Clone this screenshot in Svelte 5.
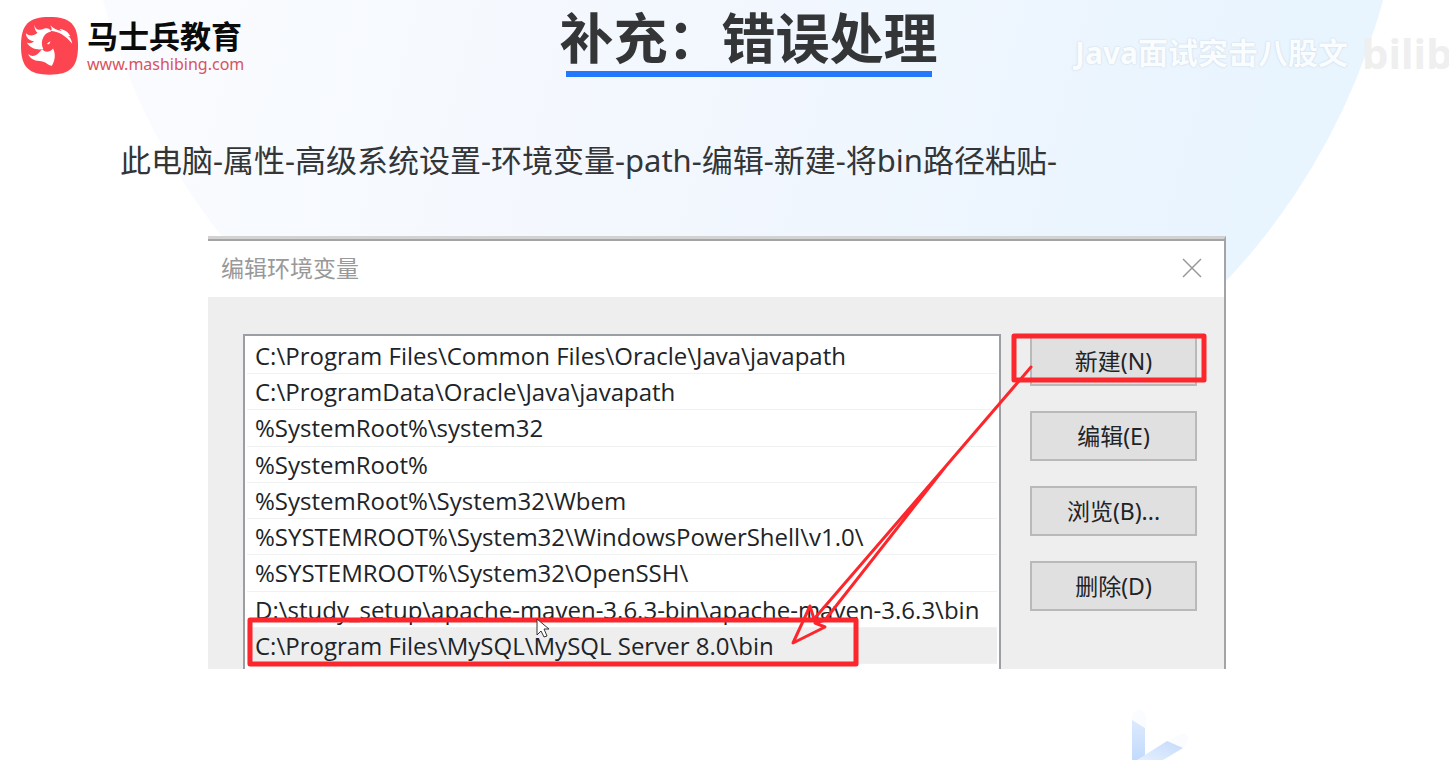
<script>
  const paths = [
    'C:\\Program Files\\Common Files\\Oracle\\Java\\javapath',
    'C:\\ProgramData\\Oracle\\Java\\javapath',
    '%SystemRoot%\\system32',
    '%SystemRoot%',
    '%SystemRoot%\\System32\\Wbem',
    '%SYSTEMROOT%\\System32\\WindowsPowerShell\\v1.0\\',
    '%SYSTEMROOT%\\System32\\OpenSSH\\',
    'D:\\study_setup\\apache-maven-3.6.3-bin\\apache-maven-3.6.3\\bin',
    'C:\\Program Files\\MySQL\\MySQL Server 8.0\\bin'
  ];
  const actions = ['新建(N)', '编辑(E)', '浏览(B)...', '删除(D)'];

  let selected = $state(8);
</script>

<div class="slide">
  <svg class="backdrop" viewBox="0 0 1449 760" preserveAspectRatio="xMidYMin slice" aria-hidden="true">
    <defs>
      <linearGradient id="disc" gradientUnits="userSpaceOnUse" x1="200" y1="0" x2="1260" y2="280">
        <stop offset="0" stop-color="#f9fbfe" />
        <stop offset="0.5" stop-color="#f2f7fe" />
        <stop offset="1" stop-color="#e8f4fe" />
      </linearGradient>
      <linearGradient id="bar" x1="0" y1="0" x2="0" y2="1">
        <stop offset="0" stop-color="#dceafd" />
        <stop offset="1" stop-color="#c3dafc" />
      </linearGradient>
      <linearGradient id="arm" x1="0" y1="1" x2="1" y2="0">
        <stop offset="0" stop-color="#e6f0fe" />
        <stop offset="1" stop-color="#c3dafc" />
      </linearGradient>
    </defs>
    <circle cx="743" cy="-173" r="663" fill="url(#disc)" />
    <path d="M1132 720c0-14 14-14 14 0v8l-14-8z" fill="#fbfcff" />
    <path d="M1132 720l13 8v32h-13z" fill="url(#bar)" />
    <path d="M1167 741l14-7c9-3 9 10 1 14z" fill="#fafcff" />
    <path d="M1137 760l30-19 16 7-20 12z" fill="url(#arm)" />
  </svg>

  <header>
    <a class="brand" href="#home">
      <svg class="horse" viewBox="9 9 176 180" aria-hidden="true">
        <path fill="#fd4551" d="M97 12C160 12 184 34 184 100S160 188 97 188 10 166 10 100 34 12 97 12z" />
        <g fill="#fff">
          <path d="M52 35C52 52 66 54 80 48C92 44 100 50 102 56C92 58 84 63 79 72C72 84 72 96 78 110C58 114 38 108 28 90C36 94 44 92 50 86C36 86 26 76 25 62C36 72 50 70 60 60C53 54 50 44 52 35z" />
          <path d="M99 37C106 48 104 52 100 54C125 56 148 70 166 94C165 82 160 74 154 70L161 71C152 55 138 49 128 49L134 55C120 52 108 46 99 37z" />
          <path d="M32 125C44 136 60 132 74 110C82 120 96 122 108 108C118 128 112 148 104 161C90 158 84 146 66 146C50 146 36 138 32 125z" />
          <path d="M90 92l10-6-3 8-5 2z" />
        </g>
      </svg>
      <span class="brand-text">
        <strong>马士兵教育</strong>
        <span class="site">www.mashibing.com</span>
      </span>
    </a>
    <h1>补充：错误处理</h1>
    <div class="watermark">
      <span>Java面试突击八股文</span>
      <span class="bili">bilibili</span>
    </div>
  </header>

  <main>
    <p class="steps">此电脑-属性-高级系统设置-环境变量-path-编辑-新建-将bin路径粘贴-</p>

    <section class="dialog" aria-label="编辑环境变量">
      <div class="titlebar">
        <h2>编辑环境变量</h2>
        <button class="close" aria-label="关闭">
          <svg viewBox="0 0 20 20" aria-hidden="true"><path d="M1 1l18 18M19 1L1 19" /></svg>
        </button>
      </div>

      <div class="content">
        <ul>
          {#each paths as path, i}
            <li class:selected={i === selected}>
              <button class="entry" onclick={() => (selected = i)}>{path}</button>
            </li>
          {/each}
        </ul>
        <div class="actions">
          {#each actions as action}
            <button>{action}</button>
          {/each}
        </div>
      </div>

      <!-- red pen marks over the dialog -->
      <svg class="marks" viewBox="0 0 1018 433" aria-hidden="true">
        <g fill="none" stroke="#fc272c" stroke-linejoin="round" stroke-linecap="round">
          <rect x="806" y="100" width="190" height="44" stroke-width="5" />
          <rect x="42" y="384" width="606" height="44" stroke-width="5" />
          <path d="M823 131L738 230 606 383M738 230L617 384" stroke-width="3" />
          <path d="M606 383L602 370 585 407 617 391 607 387 617 384" stroke-width="3" />
        </g>
        <path d="M329 383v16l4-4 3 6 3-1-3-7 5 0z" fill="#fff" stroke="#333" stroke-width="1" />
      </svg>
    </section>
  </main>
</div>

<style>
  :global(body) {
    margin: 0;
    background: #fff;
  }

  .slide {
    position: relative;
    min-height: 100vh;
    overflow: hidden;
    color: #333537;
    font-family: "Noto Sans", "Noto Sans CJK SC", sans-serif;
  }

  .backdrop {
    position: absolute;
    inset: 0;
    width: 100%;
    height: 100%;
  }

  header {
    position: relative;
    display: grid;
    grid-template-columns: 1fr auto 1fr;
    align-items: start;
    height: 100px;
    padding-left: 20px;
  }

  .brand {
    display: flex;
    gap: 8px;
    padding-top: 16px;
    color: #0b0b0b;
    text-decoration: none;
  }

  .horse {
    width: 59px;
    height: 59px;
  }

  .brand-text {
    display: flex;
    flex-direction: column;
  }

  .brand strong {
    font: 700 31px/38px "Noto Sans CJK SC", sans-serif;
  }

  .site {
    color: #d9525e;
    font-size: 16px;
    line-height: 20px;
  }

  h1 {
    margin: 0 0 0 28px;
    font: 700 54px/71px "Noto Sans CJK SC", sans-serif;
  }

  h1::after {
    content: "";
    display: block;
    height: 6px;
    margin: 0 6px;
    background: #2378fb;
  }

  .watermark {
    display: flex;
    justify-content: flex-end;
    gap: 14px;
    padding-top: 31px;
    color: #fafdff;
    font-size: 30px;
    font-weight: 700;
    line-height: 44px;
    text-shadow: 0 0 2px #c3ced8;
    white-space: nowrap;
  }

  .bili {
    width: 87px;
    overflow: hidden;
    color: #efefef;
    font-size: 42px;
    text-shadow: none;
  }

  main {
    position: relative;
    padding: 38px 223px 0 208px;
  }

  .steps {
    margin: 0 -88px 54px;
    font: 400 31px/44px "Noto Sans", "Noto Sans CJK SC", sans-serif;
  }

  .dialog {
    position: relative;
    box-sizing: border-box;
    height: 433px;
    overflow: hidden;
    border-top: 3px solid #d2d2d2;
    border-right: 2px solid #a4a4a6;
    background: #eee;
  }

  .titlebar {
    display: flex;
    align-items: center;
    justify-content: space-between;
    height: 56px;
    padding: 0 22px 0 13px;
    border-top: 2px solid #a4a4a6;
    background: #fff;
  }

  h2 {
    margin: 0 0 4px;
    color: #999;
    font: 400 23px/32px "Noto Sans CJK SC", sans-serif;
  }

  .close {
    display: flex;
    padding: 0 0 2px;
    border: 0;
    background: none;
  }

  .close svg {
    width: 20px;
    height: 20px;
    fill: none;
    stroke: #999;
    stroke-width: 1.5;
  }

  .content {
    display: flex;
    gap: 29px;
    padding: 37px 27px 0 35px;
  }

  ul {
    display: grid;
    grid-auto-rows: 1fr;
    flex: 1;
    height: 326px;
    margin: 0;
    padding: 2px 2px 20px;
    border: 2px solid #9b9ea3;
    background: #fff;
    list-style: none;
  }

  li {
    border-bottom: 1px solid #f0f2f2;
  }

  li.selected {
    background: #eee;
  }

  .entry {
    width: 100%;
    height: 35px;
    padding: 0 0 0 8px;
    border: 0;
    background: none;
    color: #202428;
    font: 400 24px/35px "Open Sans", sans-serif;
    text-align: left;
    white-space: nowrap;
  }

  .actions {
    display: flex;
    flex-direction: column;
    gap: 25px;
    width: 167px;
    padding-top: 2px;
  }

  .actions button {
    height: 50px;
    padding: 0;
    border: 2px solid #b9b9b9;
    background: #e0e0e0;
    color: #202428;
    font: 400 23px/32px "Noto Sans", "Noto Sans CJK SC", sans-serif;
  }

  .marks {
    position: absolute;
    top: -3px;
    right: -2px;
    width: 1018px;
    height: 433px;
    pointer-events: none;
  }
</style>
